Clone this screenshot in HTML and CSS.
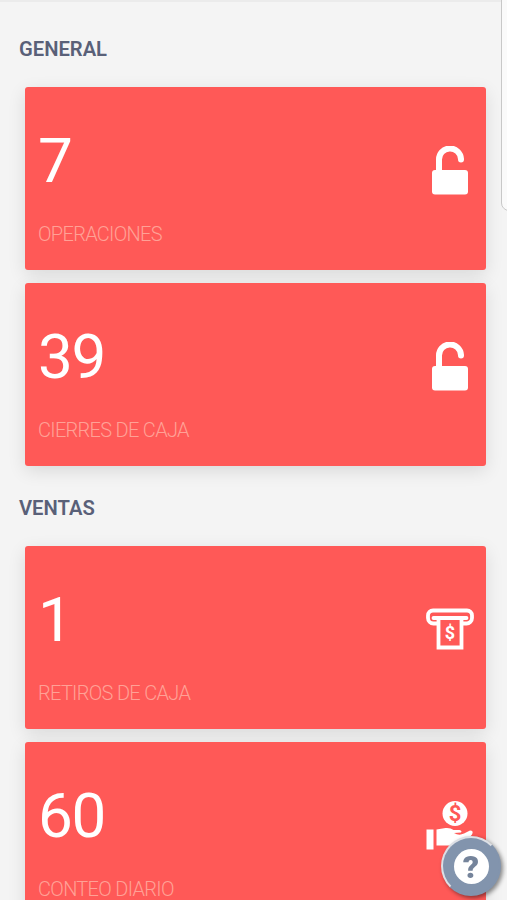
FILE: index.html
```html
<!DOCTYPE html>
<html lang="es">
<head>
    <meta charset="UTF-8">
    <meta name="viewport" content="width=device-width, initial-scale=1.0">
    <title>Resumen de caja</title>
    <link rel="stylesheet" href="styles.css">
</head>
<body>
    <main class="dashboard">
        <section class="group">
            <h2 class="group-title">GENERAL</h2>
            <div class="card">
                <div class="card-info">
                    <div class="count">7</div>
                    <div class="label">OPERACIONES</div>
                </div>
                <svg class="icon" viewBox="0 0 50 50">
                    <path d="M14 27V14a11 11 0 0 1 22-1v.5" fill="none" stroke="#fff" stroke-width="6" stroke-linecap="round"/>
                    <rect x="7" y="24" width="36" height="24.500" rx="3" fill="#fff"/>
                </svg>
            </div>
            <div class="card">
                <div class="card-info">
                    <div class="count">39</div>
                    <div class="label">CIERRES DE CAJA</div>
                </div>
                <svg class="icon" viewBox="0 0 50 50">
                    <path d="M14 27V14a11 11 0 0 1 22-1v.5" fill="none" stroke="#fff" stroke-width="6" stroke-linecap="round"/>
                    <rect x="7" y="24" width="36" height="24.500" rx="3" fill="#fff"/>
                </svg>
            </div>
        </section>

        <section class="group">
            <h2 class="group-title">VENTAS</h2>
            <div class="card">
                <div class="card-info">
                    <div class="count">1</div>
                    <div class="label">RETIROS DE CAJA</div>
                </div>
                <svg class="icon" viewBox="0 0 50 50">
                    <path d="M12 18.500H8.500a5.500 5.500 0 0 1-5.500-5.500v-2.500a5 5 0 0 1 5-5h34a5 5 0 0 1 5 5v2.500a5.500 5.500 0 0 1-5.500 5.500H38" fill="none" stroke="#fff" stroke-width="3.800"/>
                    <path d="M8.500 13h33M13.500 13v29.500h23V13" fill="none" stroke="#fff" stroke-width="3.800" stroke-linecap="round"/>
                    <text class="bill-sign" x="25" y="34">$</text>
                </svg>
            </div>
            <div class="card">
                <div class="card-info">
                    <div class="count">60</div>
                    <div class="label">CONTEO DIARIO</div>
                </div>
                <svg class="icon" viewBox="0 0 50 50">
                    <circle cx="30" cy="12.500" r="12.500" fill="#fff"/>
                    <text class="coin-sign" x="30" y="20">$</text>
                    <path d="M1.500 28.500H8.500v20H1.500zM11.500 28.500l9-1.500q5-.5 8 2h6q3 1 1.500 2.500l-7 .5q5 3 10 .5l6-3q4 0 2 4l-9 11H11.500z" fill="#fff"/>
                </svg>
            </div>
        </section>
    </main>

    <!-- Side panel handle -->
    <div class="edge-panel"></div>

    <button class="help-btn" aria-label="Ayuda">
        <span class="help-mark">?</span>
    </button>
</body>
</html>
```
FILE: styles.css
```css
* {
    box-sizing: border-box;
}
html,
body {
    height: 100%;
}
body {
    background-color: #f4f4f4;
    font-family: Roboto, "Liberation Sans", sans-serif;
    margin: 0;
    overflow: hidden;
}
.dashboard {
    border-top: 2px solid #ebebeb;
    height: 100%;
    overflow: hidden;
    padding: 35px 21px 0 19px;
}
.group {
    margin-bottom: 30px;
}
.group-title {
    color: #596078;
    font-size: 20.2px;
    font-weight: 600;
    line-height: 24px;
    margin: 0 0 26px;
}
.card {
    background-color: #ff5957;
    border-radius: 3px;
    box-shadow: 0 5px 18px rgba(0, 0, 0, 0.11);
    color: #fff;
    display: flex;
    align-items: center;
    justify-content: space-between;
    height: 183px;
    margin: 0 0 13px 6px;
    padding: 0 11px 0 13px;
}
.card-info {
    padding-top: 13px;
}
.count {
    font-size: 62px;
    letter-spacing: -1.4px;
    line-height: 74px;
}
.label {
    color: #ffa196;
    font-size: 20px;
    font-weight: 300;
    letter-spacing: -0.7px;
    line-height: 24px;
    margin-top: 24px;
}
.icon {
    width: 50px;
    height: 50px;
    margin-top: -15px;
}
.bill-sign,
.coin-sign {
    font-weight: 700;
    text-anchor: middle;
}
.bill-sign {
    fill: #fff;
    font-size: 18px;
}
.coin-sign {
    fill: #ff5957;
    font-size: 22px;
}
.edge-panel {
    position: fixed;
    top: -10px;
    right: -20px;
    width: 26px;
    height: 221px;
    background-color: #fafafa;
    border: 1px solid #c8c8c8;
    border-radius: 8px;
}
.help-btn {
    position: fixed;
    right: 6px;
    bottom: 4px;
    display: flex;
    align-items: center;
    justify-content: center;
    width: 60px;
    height: 60px;
    padding: 0;
    background-color: #8294ad;
    border: 2px solid #8294ad;
    border-top-color: #dcdfe5;
    border-left-color: #dcdfe5;
    border-radius: 50%;
    box-shadow: 2px 2px 4px rgba(0, 0, 0, 0.45);
}
.help-mark {
    width: 35px;
    height: 35px;
    background-color: #fff;
    border-radius: 50%;
    color: #75849b;
    font-family: Roboto, sans-serif;
    font-size: 32px;
    font-weight: 900;
    line-height: 36px;
    text-align: center;
}
```
